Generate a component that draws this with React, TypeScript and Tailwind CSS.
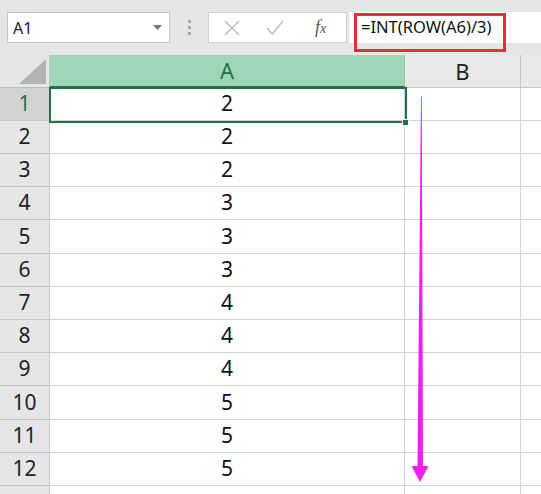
import React from 'react';

const values = [2, 2, 2, 3, 3, 3, 4, 4, 4, 5, 5, 5];
// row heights drift slightly in the screenshot (33.2px avg)
const heights = ['h-[33px]', 'h-[33px]', 'h-[33px]', 'h-[33px]', 'h-[34px]', 'h-[33px]', 'h-[33px]', 'h-[33px]', 'h-[33px]', 'h-[34px]', 'h-[33px]', 'h-[33px]'];

function XIcon() {
  return (
    <svg width="18" height="18" viewBox="0 0 18 18">
      <path d="M2 2 L16 16 M16 2 L2 16" stroke="#bdbdbd" strokeWidth="1.6" fill="none" />
    </svg>
  );
}

function CheckIcon() {
  return (
    <svg width="20" height="18" viewBox="0 0 20 18">
      <path d="M2 9 L7.5 15 L18 2" stroke="#bdbdbd" strokeWidth="1.6" fill="none" />
    </svg>
  );
}

export default function App() {
  return (
    <div className="w-[541px] h-[494px] overflow-hidden bg-[#e6e6e6] relative" style={{ fontFamily: '"Noto Sans", "Liberation Sans", sans-serif' }}>
      {/* formula toolbar */}
      <div className="flex items-start h-[55px] pt-[12px] pl-[7px]">
        <div className="w-[163px] h-[31px] bg-white border border-[#c6c6c6] flex items-center justify-between pl-[5px] pr-[7px]">
          <span className="text-[16px] text-[#222]">A1</span>
          <svg width="9" height="5" viewBox="0 0 9 5"><path d="M0 0 H9 L4.5 5 Z" fill="#777" /></svg>
        </div>
        <div className="w-[38px] h-[31px] flex flex-col items-center justify-center gap-[3px]">
          <span className="w-[3px] h-[3px] bg-[#a8a8a8]" />
          <span className="w-[3px] h-[3px] bg-[#a8a8a8]" />
          <span className="w-[3px] h-[3px] bg-[#a8a8a8]" />
        </div>
        <div className="w-[139px] h-[31px] bg-white border border-[#d0d0d0] flex items-center">
          <div className="w-[46px] flex justify-center"><XIcon /></div>
          <div className="w-[40px] flex justify-center"><CheckIcon /></div>
          <div className="flex-1 flex justify-center">
            <span className="text-[18px] italic text-[#555]" style={{ fontFamily: '"Liberation Serif", serif' }}>f<span className="text-[14px]">x</span></span>
          </div>
        </div>
        <div className="flex-1 h-[31px] bg-white border-l border-[#e0e0e0] ml-[1px] relative">
          <div className="absolute left-[5px] top-[1px] w-[152px] h-[39px] border-[3px] border-[#e0303a]" />
          <span className="absolute left-[12px] top-[3px] text-[16.5px] text-[#111]">=INT(ROW(A6)/3)</span>
        </div>
      </div>

      {/* grid */}
      <div className="flex flex-col">
        <div className="flex h-[33px]">
          <div className="w-[50px] bg-[#e6e6e6] border-r border-b border-[#c0c0c0] flex items-end justify-end pr-[3px] pb-[3px]">
            <svg width="27" height="25" viewBox="0 0 27 25"><path d="M27 0 V25 H0 Z" fill="#b3b3b3" /></svg>
          </div>
          <div className="w-[355px] bg-[#a0d6b8] border-r border-[#8fc6a6] border-b-2 border-b-[#217346] flex items-center justify-center text-[22px] text-[#217346]">A</div>
          <div className="w-[116px] bg-[#e9e9e9] border-r border-b border-[#c6c6c6] flex items-center justify-center text-[22px] text-[#222]">B</div>
          <div className="flex-1 bg-[#e9e9e9] border-b border-[#c6c6c6]" />
        </div>
        {values.map((v, i) => (
          <div key={i} className={`flex ${heights[i]}`}>
            <div className={`w-[50px] border-r border-b border-[#c6c6c6] flex items-center justify-center text-[21px] ${i === 0 ? 'bg-[#d2d2d2] text-[#217346]' : 'bg-[#e6e6e6] text-[#222]'}`}>{i + 1}</div>
            <div className="w-[355px] bg-white border-r border-b border-[#d4d4d4] flex items-center justify-center text-[21px] text-[#111]">{v}</div>
            <div className="w-[116px] bg-white border-r border-b border-[#d4d4d4]" />
            <div className="flex-1 bg-white border-b border-[#d4d4d4]" />
          </div>
        ))}
        <div className="flex h-[33px]">
          <div className="w-[50px] bg-[#e6e6e6] border-r border-[#c6c6c6]" />
          <div className="w-[355px] bg-white border-r border-[#d4d4d4]" />
          <div className="w-[116px] bg-white border-r border-[#d4d4d4]" />
          <div className="flex-1 bg-white" />
        </div>
      </div>

      {/* selection box on A1 */}
      <div className="absolute left-[49px] top-[87px] w-[358px] h-[36px] border-2 border-[#217346] pointer-events-none" />
      <div className="absolute left-[402px] top-[119px] w-[7px] h-[7px] bg-[#217346] border border-white" />

      {/* magenta arrow */}
      <svg className="absolute left-0 top-0 pointer-events-none" width="541" height="494" viewBox="0 0 541 494">
        <path d="M421 97 L421.8 97 L423 466 L428.5 466 L420 482 L411.5 466 L417.5 466 Z" fill="#f01ff0" />
      </svg>
    </div>
  );
}
